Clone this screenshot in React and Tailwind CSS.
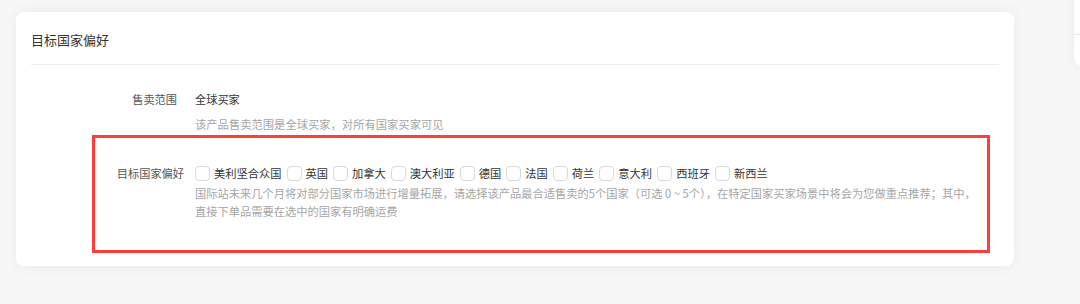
import React from "react";

const countries = ["美利坚合众国", "英国", "加拿大", "澳大利亚", "德国", "法国", "荷兰", "意大利", "西班牙", "新西兰"];

export default function App() {
  return (
    <div
      className="relative w-[1080px] h-[304px] overflow-hidden bg-[#f7f7f7]"
      style={{ fontFamily: '"Noto Sans CJK SC", "Noto Sans", sans-serif' }}
    >
      {/* partial card at right edge */}
      <div className="absolute left-[1074px] top-[-10px] w-[40px] h-[76px] bg-white rounded-bl-lg shadow-[0_0_14px_rgba(0,0,0,0.06)]">
        <div className="mt-[44px] border-b border-[#e8e8e8]" />
      </div>

      <div className="pt-[12px] pl-[16px]">
        <div className="w-[998px] h-[254px] bg-white rounded-lg shadow-[0_0_14px_rgba(0,0,0,0.06)]">
          <div className="mx-[15px] pt-[18px] pb-[14px] border-b border-[#ececec]">
            <div className="text-[13px] leading-[20px] text-[#333]">目标国家偏好</div>
          </div>

          {/* row 1 */}
          <div className="mt-[25px] flex">
            <div className="w-[162px] pr-[1px] text-right text-[11.2px] leading-[18px] text-[#555]">售卖范围</div>
            <div className="ml-[17px]">
              <div className="text-[11.2px] leading-[18px] text-[#333]">全球买家</div>
              <div className="mt-[7px] text-[11.3px] leading-[18px] text-[#a6a6a6]">该产品售卖范围是全球买家，对所有国家买家可见</div>
            </div>
          </div>

          {/* row 2 in red box */}
          <div className="mt-[2px] ml-[76px] w-[898px] h-[118px] border-[3px] border-[#ff3d3d]">
            <div className="pt-[26px] flex">
              <div className="w-[89px] text-right text-[11.2px] leading-[18px] text-[#555]">目标国家偏好</div>
              <div className="ml-[11px]">
                <div className="flex items-center h-[18px]">
                  {countries.map((c) => (
                    <label key={c} className="flex items-center mr-[5px]">
                      <span className="w-[15px] h-[15px] rounded-[4px] border border-[#d9d9d9] bg-white" />
                      <span className="ml-[4px] text-[11.25px] leading-[18px] text-[#333] whitespace-nowrap">{c}</span>
                    </label>
                  ))}
                </div>
                <div className="mt-[3px] text-[11.25px] leading-[17.5px] text-[#a6a6a6] whitespace-nowrap">
                  <div>国际站未来几个月将对部分国家市场进行增量拓展，请选择该产品最合适售卖的5个国家（可选 0 ~ 5个），在特定国家买家场景中将会为您做重点推荐；其中，</div>
                  <div>直接下单品需要在选中的国家有明确运费</div>
                </div>
              </div>
            </div>
          </div>
        </div>
      </div>
    </div>
  );
}
